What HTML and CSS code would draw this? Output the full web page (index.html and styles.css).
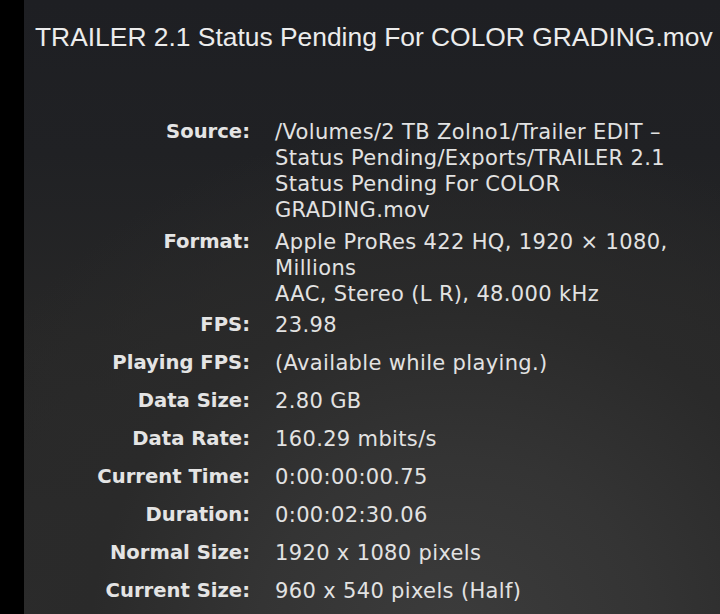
FILE: index.html
```html
<!DOCTYPE html>
<html lang="en">
<head>
<meta charset="utf-8">
<title>Movie Inspector</title>
<link rel="stylesheet" href="styles.css">
</head>
<body>
<div class="strip"></div>
<main class="panel">
  <h1 class="title">TRAILER 2.1 Status Pending For COLOR GRADING.mov</h1>
  <div class="info">
    <div class="row">
      <div class="label">Source:</div>
      <div class="value"><span class="ln">/Volumes/2 TB Zolno1/Trailer EDIT –</span><span class="ln">Status Pending/Exports/TRAILER 2.1</span><span class="ln">Status Pending For COLOR</span><span class="ln">GRADING.mov</span></div>
    </div>
    <div class="row tight">
      <div class="label">Format:</div>
      <div class="value"><span class="ln">Apple ProRes 422 HQ, 1920 × 1080,</span><span class="ln">Millions</span><span class="ln">AAC, Stereo (L R), 48.000 kHz</span></div>
    </div>
    <div class="row tight2">
      <div class="label">FPS:</div>
      <div class="value">23.98</div>
    </div>
    <div class="row">
      <div class="label">Playing FPS:</div>
      <div class="value">(Available while playing.)</div>
    </div>
    <div class="row">
      <div class="label">Data Size:</div>
      <div class="value">2.80 GB</div>
    </div>
    <div class="row">
      <div class="label">Data Rate:</div>
      <div class="value">160.29 mbits/s</div>
    </div>
    <div class="row">
      <div class="label">Current Time:</div>
      <div class="value">0:00:00:00.75</div>
    </div>
    <div class="row">
      <div class="label">Duration:</div>
      <div class="value">0:00:02:30.06</div>
    </div>
    <div class="row">
      <div class="label">Normal Size:</div>
      <div class="value">1920 x 1080 pixels</div>
    </div>
    <div class="row">
      <div class="label">Current Size:</div>
      <div class="value">960 x 540 pixels (Half)</div>
    </div>
  </div>
</main>
</body>
</html>
```

FILE: styles.css
```css
html, body {
  margin: 0;
  height: 100%;
}
body {
  display: flex;
  background: #000;
  overflow: hidden;
}
.strip {
  width: 24px;
  flex: none;
  background: #000;
}
.panel {
  flex: 1;
  min-width: 0;
  background:
    radial-gradient(ellipse 560px 520px at 430px 640px, #3c3c3c 0%, #343434 35%, #2a2a2a 65%, rgba(34,34,36,0) 100%),
    linear-gradient(to bottom, #1e1f23 0%, #202124 25%, #272727 55%, #2c2c2c 100%);
  padding-top: 22px;
  box-sizing: border-box;
}
.title {
  margin: 0 0 0 11px;
  font-family: "Liberation Sans", Arial, sans-serif;
  font-weight: normal;
  font-size: 26.4px;
  line-height: 30px;
  color: #ececec;
  white-space: nowrap;
}
.info {
  margin-top: 67px;
  display: flex;
  flex-direction: column;
  font-family: "DejaVu Sans", sans-serif;
  line-height: 26px;
}
.row {
  display: flex;
  gap: 25px;
  margin-top: 12px;
}
.row:first-child { margin-top: 0; }
.row.tight { margin-top: 6px; }
.row.tight2 { margin-top: 5px; }
.label {
  width: 226px;
  flex: none;
  text-align: right;
  font-weight: bold;
  font-size: 19.6px;
  color: #e4e4e4;
}
.value {
  font-size: 21px;
  letter-spacing: 0.35px;
  color: #e2e2e2;
  white-space: nowrap;
}
.ln { display: block; }
```
